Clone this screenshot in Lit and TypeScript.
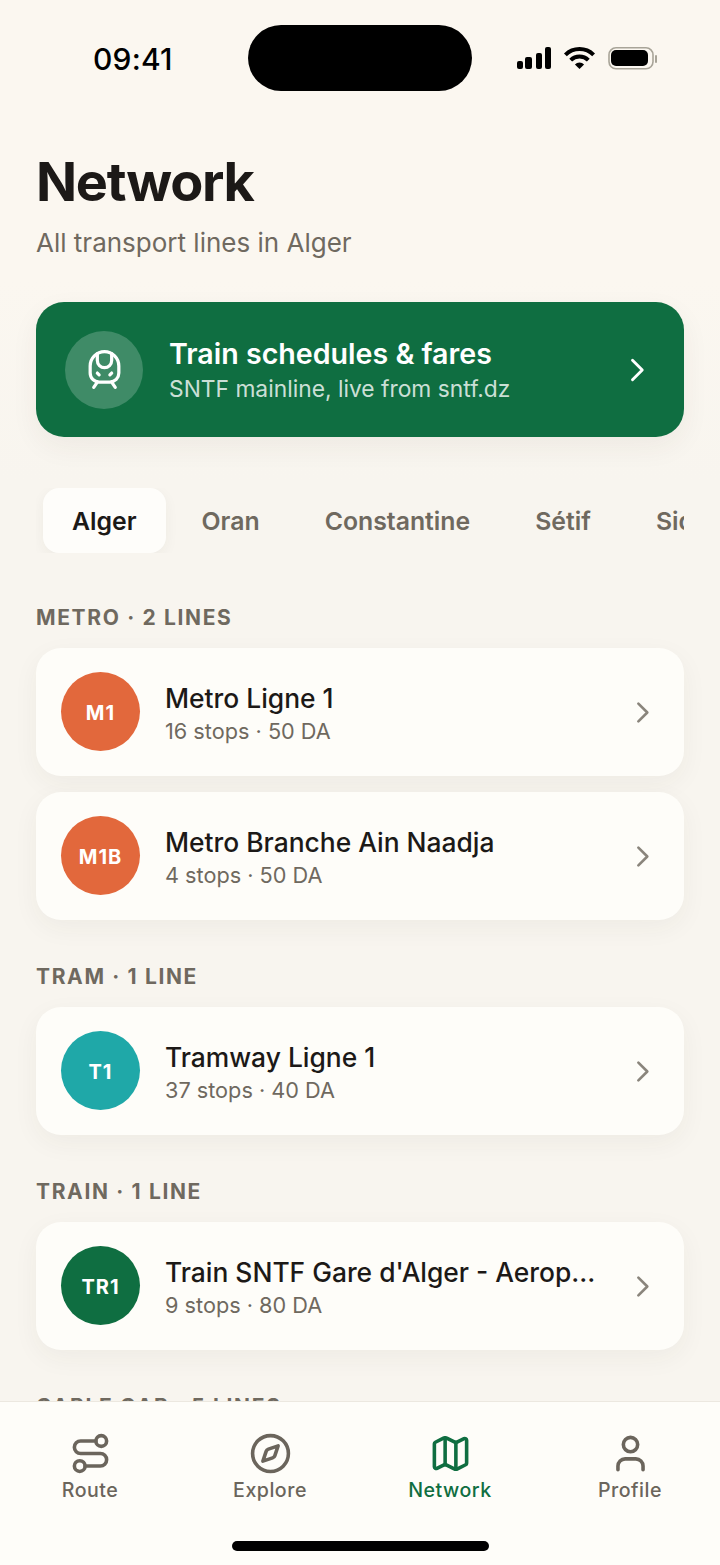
import { LitElement, html, css, svg } from "lit";
import { customElement } from "lit/decorators.js";

const lines = [
  {
    head: "METRO · 2 LINES",
    items: [
      { code: "M1", name: "Metro Ligne 1", meta: "16 stops · 50 DA", color: "#e2683c" },
      { code: "M1B", name: "Metro Branche Ain Naadja", meta: "4 stops · 50 DA", color: "#e2683c" },
    ],
  },
  {
    head: "TRAM · 1 LINE",
    items: [{ code: "T1", name: "Tramway Ligne 1", meta: "37 stops · 40 DA", color: "#1fa8a8" }],
  },
  {
    head: "TRAIN · 1 LINE",
    items: [{ code: "TR1", name: "Train SNTF Gare d'Alger - Aeroport", meta: "9 stops · 80 DA", color: "#0f6e41" }],
  },
  { head: "CABLE CAR · 5 LINES", items: [] },
];

const chevron = svg`<path d="M9 5.500 15.500 12 9 18.500" fill="none" stroke="currentColor" stroke-width="1.900" stroke-linecap="round" stroke-linejoin="round"/>`;

const tabs = [
  {
    label: "Route",
    icon: svg`<circle cx="6" cy="19" r="3"/><path d="M9 19h8.500a3.500 3.500 0 0 0 0-7h-11a3.500 3.500 0 0 1 0-7H15"/><circle cx="18" cy="5" r="3"/>`,
  },
  {
    label: "Explore",
    icon: svg`<path d="m16.240 7.760-1.804 5.411a2 2 0 0 1-1.265 1.265L7.760 16.240l1.804-5.411a2 2 0 0 1 1.265-1.265z"/><circle cx="12" cy="12" r="10"/>`,
  },
  {
    label: "Network",
    active: true,
    icon: svg`<path d="M14.106 5.553a2 2 0 0 0 1.788 0l3.659-1.830A1 1 0 0 1 21 4.619v12.764a1 1 0 0 1-.553.894l-4.553 2.277a2 2 0 0 1-1.788 0l-4.212-2.106a2 2 0 0 0-1.788 0l-3.659 1.830A1 1 0 0 1 3 19.381V6.618a1 1 0 0 1 .553-.894l4.553-2.277a2 2 0 0 1 1.788 0z"/><path d="M15 5.764v15"/><path d="M9 3.236v15"/>`,
  },
  {
    label: "Profile",
    icon: svg`<path d="M19 21v-2a4 4 0 0 0-4-4H9a4 4 0 0 0-4 4v2"/><circle cx="12" cy="7" r="4"/>`,
  },
];

@customElement("app-root")
export class AppRoot extends LitElement {
  static styles = css`
    :host {
      display: flex;
      flex-direction: column;
      position: relative;
      width: 720px;
      height: 1565px;
      overflow: hidden;
      background: linear-gradient(#fbf7f0 0, #fbf7f0 280px, #f8f5ef 480px);
      font-family: Inter, "Liberation Sans", sans-serif;
      color: #1c1917;
    }
    .scroll {
      flex: 1;
      min-height: 0;
      overflow: hidden;
      display: flex;
      flex-direction: column;
    }
    .status {
      flex: none;
      height: 148px;
      padding: 0 63px 0 93px;
      display: flex;
      align-items: flex-start;
      justify-content: space-between;
    }
    .time {
      margin-top: 41px;
      font-size: 30px;
      line-height: 36px;
      font-weight: 500;
      letter-spacing: 0.2px;
      color: #000;
    }
    .sys {
      margin-top: 46px;
      display: flex;
      align-items: center;
    }
    .island {
      position: absolute;
      left: 248px;
      top: 25px;
      width: 224px;
      height: 66px;
      border-radius: 33px;
      background: #000;
    }
    .header {
      flex: none;
      padding: 0 36px;
    }
    h1 {
      margin: 0;
      font-size: 54px;
      line-height: 68px;
      font-weight: 700;
      letter-spacing: -1.3px;
    }
    .sub {
      margin-top: 11px;
      font-size: 26px;
      line-height: 32px;
      color: #6f695f;
    }
    .banner {
      flex: none;
      margin: 43px 36px 0;
      height: 135px;
      box-sizing: border-box;
      padding: 0 29px 0 29px;
      border-radius: 28px;
      background: #0f6e41;
      color: #fff;
      display: flex;
      align-items: center;
      gap: 26px;
      box-shadow: 0 10px 28px rgba(60, 50, 30, 0.06);
    }
    .banner-icon {
      flex: none;
      width: 78px;
      height: 78px;
      border-radius: 50%;
      background: rgba(255, 255, 255, 0.2);
      display: flex;
      align-items: center;
      justify-content: center;
    }
    .train {
      fill: none;
      stroke: #fff;
      stroke-width: 1.8;
      stroke-linecap: round;
      stroke-linejoin: round;
    }
    .banner-text {
      flex: 1;
      min-width: 0;
      padding-top: 1px;
    }
    .banner-title {
      font-size: 28.6px;
      line-height: 34px;
      font-weight: 600;
    }
    .banner-sub {
      margin-top: 4px;
      font-size: 22.8px;
      line-height: 28px;
      color: rgba(255, 255, 255, 0.8);
    }
    .chips {
      flex: none;
      margin: 51px 36px 0;
      padding-left: 7px;
      display: flex;
      overflow: hidden;
      white-space: nowrap;
    }
    .chip {
      flex: none;
      height: 65px;
      padding: 0 29px;
      margin-right: 7px;
      display: flex;
      align-items: center;
      font-size: 24.8px;
      font-weight: 600;
      color: #6f695f;
      border-radius: 16px;
    }
    .chip.on {
      background: #fefdfa;
      color: #1c1917;
      box-shadow: 0 4px 14px rgba(60, 50, 30, 0.05);
    }
    .group {
      flex: none;
      margin-top: 51px;
      padding: 0 36px;
    }
    .group + .group {
      margin-top: 43px;
    }
    .group-head {
      font-size: 21px;
      line-height: 28px;
      font-weight: 700;
      letter-spacing: 1.65px;
      color: #6f695f;
    }
    .cards {
      margin-top: 16px;
      display: flex;
      flex-direction: column;
      gap: 16px;
    }
    .card {
      height: 128px;
      box-sizing: border-box;
      padding: 0 25px;
      display: flex;
      align-items: center;
      gap: 25px;
      background: #fefdf9;
      border-radius: 25px;
      box-shadow: 0 8px 26px rgba(60, 50, 30, 0.05);
    }
    .badge {
      flex: none;
      box-sizing: border-box;
      width: 79px;
      height: 79px;
      margin-bottom: 2px;
      padding-top: 3px;
      border-radius: 50%;
      color: #fff;
      display: flex;
      align-items: center;
      justify-content: center;
      font-size: 20px;
      font-weight: 700;
      letter-spacing: 1px;
    }
    .card-text {
      flex: 1;
      min-width: 0;
      padding-top: 2px;
    }
    .name {
      font-size: 26.4px;
      line-height: 32px;
      font-weight: 550;
      white-space: nowrap;
      overflow: hidden;
      text-overflow: ellipsis;
    }
    .meta {
      margin-top: 4px;
      font-size: 21.7px;
      line-height: 27px;
      color: #6f695f;
    }
    .chev {
      flex: none;
      color: #8a857c;
      margin-left: -3px;
    }
    .tabbar {
      flex: none;
      position: relative;
      height: 164px;
      box-sizing: border-box;
      padding-top: 30px;
      background: #fefdf9;
      border-top: 1px solid #ece8e0;
      display: grid;
      grid-template-columns: repeat(4, 180px);
    }
    .tab {
      display: flex;
      flex-direction: column;
      align-items: center;
      color: #6b655c;
      font-size: 19.6px;
      line-height: 24px;
      font-weight: 550;
      letter-spacing: 0.5px;
    }
    .tab.on {
      color: #0f6e41;
    }
    .tab svg {
      width: 43px;
      height: 43px;
      fill: none;
      stroke: currentColor;
      stroke-width: 2;
      stroke-linecap: round;
      stroke-linejoin: round;
      margin-bottom: 3px;
    }
    .home {
      position: absolute;
      left: 232px;
      bottom: 14px;
      width: 257px;
      height: 10px;
      border-radius: 5px;
      background: #000;
    }
  `;

  render() {
    return html`
      <div class="scroll">
        <div class="status">
          <div class="time">09:41</div>
          <div class="sys">
            <svg width="141" height="26" viewBox="0 0 141 26">
              <rect x="1" y="15" width="6" height="8" rx="2" />
              <rect x="9" y="11" width="7" height="12" rx="2" />
              <rect x="20" y="7" width="6" height="16" rx="2" />
              <rect x="29" y="1" width="6" height="22" rx="2" />
              <path d="M49.400 8.900a20 20 0 0 1 28.200 0M54.700 14.200a12.500 12.500 0 0 1 17.600 0" fill="none" stroke="#000" stroke-width="4" />
              <path d="M63.500 23 58.900 18.400a6.500 6.500 0 0 1 9.200 0z" />
              <rect x="93" y="1.800" width="44" height="21" rx="7" fill="none" stroke="#a8a498" stroke-width="1.600" />
              <rect x="95" y="4" width="37" height="16" rx="5" />
              <rect x="139" y="9" width="2" height="8" rx="1" fill="#a8a498" />
            </svg>
          </div>
        </div>
        <div class="island"></div>
        <div class="header">
          <h1>Network</h1>
          <div class="sub">All transport lines in Alger</div>
        </div>
        <div class="banner">
          <div class="banner-icon">
            <svg class="train" width="43" height="43" viewBox="0 0 24 24">
              <path d="M8 3.100V7a4 4 0 0 0 8 0V3.100" />
              <path d="m9 15-1-1" />
              <path d="m15 15 1-1" />
              <path d="M9 19c-2.800 0-5-2.200-5-5v-4a8 8 0 0 1 16 0v4c0 2.800-2.200 5-5 5Z" />
              <path d="m8 19-2 3" />
              <path d="m16 19 2 3" />
            </svg>
          </div>
          <div class="banner-text">
            <div class="banner-title">Train schedules &amp; fares</div>
            <div class="banner-sub">SNTF mainline, live from sntf.dz</div>
          </div>
          <svg width="36" height="36" viewBox="0 0 24 24">${chevron}</svg>
        </div>
        <div class="chips">
          ${["Alger", "Oran", "Constantine", "Sétif", "Sidi Bel Abbès"].map(
            (c, i) => html`<div class="chip ${i === 0 ? "on" : ""}">${c}</div>`
          )}
        </div>
        ${lines.map(
          (g) => html`
            <section class="group">
              <div class="group-head">${g.head}</div>
              ${g.items.length
                ? html`<div class="cards">
                    ${g.items.map(
                      (it) => html`
                        <div class="card">
                          <div class="badge" style="background:${it.color}">${it.code}</div>
                          <div class="card-text">
                            <div class="name">${it.name}</div>
                            <div class="meta">${it.meta}</div>
                          </div>
                          <svg class="chev" width="33" height="33" viewBox="0 0 24 24">${chevron}</svg>
                        </div>
                      `
                    )}
                  </div>`
                : ""}
            </section>
          `
        )}
      </div>
      <nav class="tabbar">
        ${tabs.map(
          (t) => html`<div class="tab ${t.active ? "on" : ""}">
            <svg viewBox="0 0 24 24">${t.icon}</svg>
            <span>${t.label}</span>
          </div>`
        )}
        <div class="home"></div>
      </nav>
    `;
  }
}
